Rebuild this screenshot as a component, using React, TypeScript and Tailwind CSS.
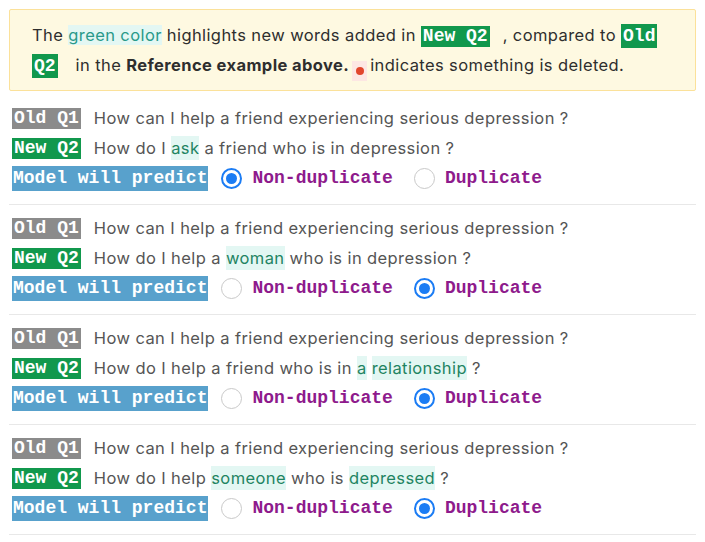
import React from "react";

type Seg = { t: string; hl?: boolean };

type Pair = {
  old: string;
  next: Seg[];
  pick: "non" | "dup";
};

const PAIRS: Pair[] = [
  {
    old: "How can I help a friend experiencing serious depression ?",
    next: [{ t: "How do I " }, { t: "ask", hl: true }, { t: " a friend who is in depression ?" }],
    pick: "non",
  },
  {
    old: "How can I help a friend experiencing serious depression ?",
    next: [{ t: "How do I help a " }, { t: "woman", hl: true }, { t: " who is in depression ?" }],
    pick: "dup",
  },
  {
    old: "How can I help a friend experiencing serious depression ?",
    next: [
      { t: "How do I help a friend who is in " },
      { t: "a", hl: true },
      { t: " " },
      { t: "relationship", hl: true },
      { t: " ?" },
    ],
    pick: "dup",
  },
  {
    old: "How can I help a friend experiencing serious depression ?",
    next: [
      { t: "How do I help " },
      { t: "someone", hl: true },
      { t: " who is " },
      { t: "depressed", hl: true },
      { t: " ?" },
    ],
    pick: "dup",
  },
];

const mono = "font-['Courier_New','Liberation_Mono',monospace] font-bold tracking-normal";

const Tag: React.FC<{ color: string; children: React.ReactNode }> = ({ color, children }) => (
  <span className={`${mono} ${color} inline-block px-[2px] text-[18px] leading-[21px] text-white whitespace-pre`}>
    {children}
  </span>
);

const Radio: React.FC<{ on: boolean; label: string }> = ({ on, label }) => (
  <div className="flex items-center">
    {on ? (
      <span className="flex h-[21px] w-[21px] items-center justify-center rounded-full border-2 border-[#1b7cf4] bg-white">
        <span className="h-[11px] w-[11px] rounded-full bg-[#1b7cf4]" />
      </span>
    ) : (
      <span className="h-[21px] w-[21px] rounded-full border border-[#c9c9c9] bg-white" />
    )}
    <span className={`${mono} ml-[10px] text-[18px] text-[#8e1a8c]`}>{label}</span>
  </div>
);

export default function App() {
  return (
    <div className="min-h-screen w-[705px] bg-white px-[9px] pt-[9px] font-['Inter','Liberation_Sans',sans-serif] tracking-[0.4px]">
      <div className="rounded-[2px] border border-[#fbe19a] bg-[#fef9e1] pb-[9px] pl-[22px] pr-[20px] pt-[11px] text-[16.5px] leading-[29px] text-[#2e2e2e]">
        The <span className="bg-[#e3f7f3] text-[#2a9a8a]">green color</span> highlights new words added in{" "}
        <Tag color="bg-[#11984d]">New Q2</Tag>
        <span className="ml-[13px]">, compared to </span>
        <span
          className={`${mono} bg-[#11984d] px-[2px] py-[2px] text-[18px] text-white [box-decoration-break:clone]`}
        >
          Old Q2
        </span>
        <span className="ml-[18px]">in the </span>
        <span className="font-bold">Reference example above.</span>
        <span className="mx-[3px] inline-flex h-[20px] w-[15px] translate-y-[4px] items-center justify-center bg-[#fde7e3] align-baseline">
          <span className="h-[8px] w-[8px] rounded-full bg-[#e2462c]" />
        </span>
        indicates something is deleted.
      </div>

      <div className="mt-[4px]">
        {PAIRS.map((p, i) => (
          <div key={i} className="border-b border-[#e8e8e8] pb-[10px] pl-[3px] pt-[9px]">
            <div className="flex h-[29px] items-center">
              <Tag color="bg-[#8b8b8b]">Old Q1</Tag>
              <span className="ml-[13px] text-[16.5px] text-[#555]">{p.old}</span>
            </div>
            <div className="flex h-[30px] items-center">
              <Tag color="bg-[#11984d]">New Q2</Tag>
              <span className="ml-[13px] whitespace-pre text-[16.5px] text-[#555]">
                {p.next.map((s, j) =>
                  s.hl ? (
                    <span key={j} className="bg-[#e3f7f3] py-[2px] text-[#1f8462]">
                      {s.t}
                    </span>
                  ) : (
                    <span key={j}>{s.t}</span>
                  )
                )}
              </span>
            </div>
            <div className="flex h-[31px] items-center">
              <span className={`${mono} inline-block bg-[#58a1cc] px-[1px] text-[18px] leading-[25px] text-white whitespace-pre`}>
                Model will predict
              </span>
              <div className="ml-[13px] flex items-center gap-[21px]">
                <Radio on={p.pick === "non"} label="Non-duplicate" />
                <Radio on={p.pick === "dup"} label="Duplicate" />
              </div>
            </div>
          </div>
        ))}
      </div>
    </div>
  );
}
